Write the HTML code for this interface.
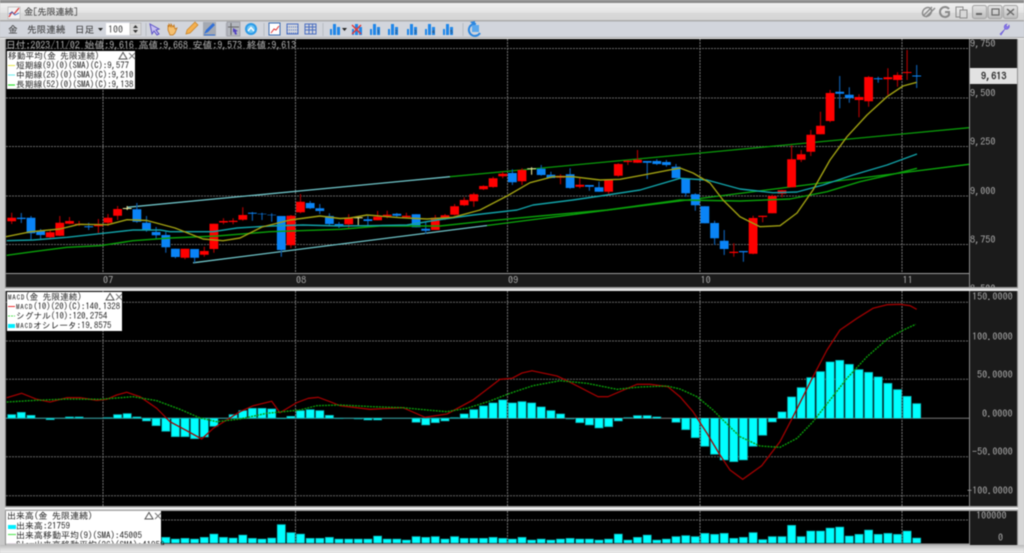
<!DOCTYPE html>
<html><head><meta charset="utf-8"><style>
html,body{margin:0;padding:0;background:#ccc;width:1024px;height:553px;overflow:hidden}
svg{display:block;filter:blur(.45px)}
text{font-family:"IPAGothic","Liberation Mono","Noto Sans CJK JP",monospace;white-space:pre}
.a{fill:#a8a8a8;font-size:10.2px}
.l{fill:#1c1c1c;font-size:8.7px}
.t{fill:#333;font-size:10px}
.m{font-size:7px;letter-spacing:.8px}
</style></head><body>
<svg width="1024" height="553" viewBox="0 0 1024 553" xmlns="http://www.w3.org/2000/svg">
<defs>
<linearGradient id="tb" x1="0" y1="0" x2="0" y2="1"><stop offset="0" stop-color="#f0f0f0"/><stop offset=".55" stop-color="#e4e4e4"/><stop offset=".6" stop-color="#d8d8d8"/><stop offset="1" stop-color="#d6d6d6"/></linearGradient>
<linearGradient id="bt" x1="0" y1="0" x2="0" y2="1"><stop offset="0" stop-color="#e4e4e4"/><stop offset="1" stop-color="#bcbcbc"/></linearGradient>
<linearGradient id="bot" x1="0" y1="0" x2="0" y2="1"><stop offset="0" stop-color="#b8b8b8"/><stop offset=".5" stop-color="#dcdcdc"/><stop offset="1" stop-color="#eeeeee"/></linearGradient>
<g id="bars"><path d="M1 14V8h2v6zM4 14V3h3v11zM8 14V6h3v8z" fill="#1f86e8"/></g>
<g id="lx"><path d="M0 7L4 0.5L8 7z" fill="none" stroke="#555" stroke-width="1"/><path d="M10 1l6 6M16 1l-6 6" stroke="#777" stroke-width="1"/></g>
<clipPath id="top"><rect x="6" y="39" width="1011" height="248"/></clipPath>
<clipPath id="vol"><rect x="0" y="511" width="1017" height="34"/></clipPath>
</defs>

<!-- window chrome -->
<rect width="1024" height="553" fill="#cfcfcf"/>
<rect width="1024" height="3" fill="#8c8c8c"/>
<rect y="3" width="1024" height="17" fill="url(#tb)"/>
<rect y="20" width="1024" height="1.5" fill="#ababab"/>
<rect y="21.5" width="1024" height="15.5" fill="#d2d5dc"/>
<rect y="37" width="1024" height="1" fill="#a8a8a8"/>
<rect y="38" width="1024" height="1" fill="#eee"/>
<rect x="0" y="39" width="5" height="506" fill="#c9c9c9"/>
<rect x="5" y="39" width="1" height="506" fill="#8a8a8a"/>
<rect x="1017" y="39" width="7" height="506" fill="#d6d6d6"/>
<rect x="1017" y="39" width="1" height="506" fill="#8f8f8f"/>
<rect y="545" width="1024" height="8" fill="url(#bot)"/>

<!-- title -->
<rect x="8" y="7" width="12" height="12" fill="#f2f2f2" stroke="#aaa" stroke-width=".6"/>
<path d="M9 17l3-5 2 2 5-6" fill="none" stroke="#d83030" stroke-width="1.2"/>
<path d="M9 14l3-2 3 3 4-2" fill="none" stroke="#3060c0" stroke-width=".8"/>
<text x="24" y="15" class="t" style="font-size:9.2px;fill:#333" textLength="54">金[先限連続]</text>

<g fill="none" stroke="#8a8a8a" stroke-width="1.4">
<path d="M923 16l9-9M926 17l9-9"/><ellipse cx="927" cy="12" rx="4" ry="5" transform="rotate(45 927 12)"/>
<path d="M949 9a5 5 0 1 0 0 6v-3h-4" stroke-width="2"/>
<rect x="956" y="7" width="7" height="10" stroke-width="1"/><rect x="960" y="10" width="7" height="8" fill="#d8d8d8" stroke-width="1"/>
</g>
<g stroke="#a2a2a2" fill="url(#bt)"><rect x="972.5" y="5.5" width="14" height="13" rx="2"/><rect x="988" y="5.5" width="14" height="13" rx="2"/><rect x="1003.5" y="5.5" width="14" height="13" rx="2"/></g>
<rect x="976" y="13" width="6" height="2" fill="#666"/>
<rect x="992" y="9" width="7" height="6" fill="none" stroke="#666" stroke-width="1.2"/>
<path d="M1007 9l7 6M1014 9l-7 6" stroke="#666" stroke-width="1.4"/>

<!-- toolbar -->
<text x="8" y="33" class="t" style="font-size:9.6px">金</text>
<text x="27" y="33" class="t" style="font-size:9.6px">先限連続</text>
<text x="75" y="33" class="t" style="font-size:9.6px">日足</text>
<path d="M98 28h5l-2.5 3z" fill="#222"/>
<rect x="106" y="23" width="35" height="12" fill="#fff"/>
<text x="108" y="33" class="t" style="font-size:10px;fill:#444">100</text>
<rect x="130" y="23" width="11" height="12" fill="#d8d8d8" stroke="#aaa" stroke-width=".6"/>
<path d="M133 28h5l-2.500-3zM133 30h5l-2.500 3z" fill="#333"/>
<path d="M146 23v13M226 23v13M264 23v13M323 23v13M463 23v13" stroke="#b9bcc3"/>
<path d="M150 24l9 5-3 1 3 4-2 1-3-4-2 3z" fill="#c8c0f0" stroke="#5a50c8"/>
<path d="M168 30v-5l1 2 0-3 2 3 0-3 2 3 1-2 1 4 2-1-2 5-2 2h-3z" fill="#f5c070" stroke="#c07010" stroke-width=".7"/>
<path d="M186 34l1-4 8-8 3 3-8 8z" fill="#f4b050" stroke="#c88020" stroke-width=".7"/>
<rect x="203" y="22" width="13" height="14" fill="#a4a9b2"/>
<path d="M204 34l2-4 7-7 2 2-7 7z" fill="#2f6fd8"/><path d="M204 35h11" stroke="#2f6fd8"/>
<rect x="227" y="22" width="13" height="14" fill="#b4b7be" stroke="#8a8d94" stroke-width=".6"/>
<path d="M231 23v12M228 27h11" stroke="#666"/><path d="M233 28l5 3-2 .5 1 3-2 0-1-3-1 1z" fill="#5040c0"/>
<circle cx="251" cy="29" r="6" fill="#2a9ae8"/><circle cx="251" cy="29" r="4" fill="#6cc4f4"/>
<path d="M248 31l3-3.500 3 3.500" fill="none" stroke="#fff" stroke-width="1.500"/>
<rect x="269" y="23" width="11" height="12" fill="#fff" stroke="#3a6ab0"/><path d="M271 33l3-4 2 1 3-4" fill="none" stroke="#e03030"/>
<g fill="none" stroke="#4a6ec0"><rect x="287" y="24" width="11" height="10"/><path d="M287 27h11M287 30h11M287 33h11" stroke-dasharray="1 1"/></g>
<g fill="none" stroke="#4a6ec0"><rect x="305" y="24" width="11" height="10"/><path d="M305 27h11M305 30h11M309 24v10M312.500 24v10"/></g>
<use href="#bars" x="329" y="21"/><path d="M342 28h5l-2.500 3z" fill="#222"/>
<use href="#bars" x="351" y="21"/><path d="M352 25l9 9M361 25l-9 9" stroke="#e03838" stroke-width="1.500"/>
<use href="#bars" x="369" y="21"/><text x="377" y="34" style="font-size:5.500px;fill:#345">1</text>
<use href="#bars" x="387" y="21"/><text x="395" y="34" style="font-size:5.500px;fill:#345">2</text>
<use href="#bars" x="406" y="21"/><text x="414" y="34" style="font-size:5.500px;fill:#345">3</text>
<use href="#bars" x="424" y="21"/><text x="432" y="34" style="font-size:5.500px;fill:#345">4</text>
<use href="#bars" x="442" y="21"/><text x="450" y="34" style="font-size:5.500px;fill:#345">5</text>
<path d="M476 24a6 6 0 1 0 4 9" fill="none" stroke="#2a86e0" stroke-width="2"/><path d="M470 22l5-1 0 5z" fill="#2a86e0"/>
<rect x="472" y="25" width="7" height="7" fill="#5aa8ee"/>
<path d="M1000 34l5-5a3 3 0 0 1 2-5l-1 2 2 1 1-2a3 3 0 0 1-4 4l-4 6z" fill="#8878e8" stroke="#6a58d8" stroke-width=".6"/>

<!-- top panel -->
<rect x="6" y="39" width="963" height="234" fill="#000"/>
<rect x="970" y="39" width="47" height="248" fill="#1b1b1b"/>
<rect x="6" y="273" width="964" height="1" fill="#9a9a9a"/>
<rect x="6" y="274" width="964" height="13" fill="#1b1b1b"/>
<rect x="969" y="39" width="1" height="248" fill="#8d8d8d"/>
<rect x="970" y="68" width="47" height="16" fill="#e2e2e2"/>
<rect y="287" x="5" width="1013" height="1.500" fill="#9c9c9c"/>
<rect y="288.500" x="5" width="1013" height="2.500" fill="#e4e4e4"/>

<g stroke="#666" stroke-dasharray="2 1" fill="none">
<path d="M6 48.500H969M6 98H969M6 146.500H969M6 196H969M6 244.500H969"/>
<path stroke="#777" d="M103 39V273M295.500 39V273M507.500 39V273M700 39V273M902 39V273"/>
</g>

<!-- trendlines -->
<path d="M127 207.300L450 176.700" stroke="#6fc4c8" stroke-width="1.300" fill="none"/>
<path d="M450 176.700L969 127.700" stroke="#0a9a0a" stroke-width="1.300" fill="none"/>
<path d="M193 262.800L487 225.500" stroke="#6fc4c8" stroke-width="1.300" fill="none"/>
<path d="M487 225.500L969 164.300" stroke="#0cab0c" stroke-width="1.300" fill="none"/>

<!-- wicks -->
<path fill="none" stroke="#a80000" stroke-width="1.200" d="M11.700 212.700V224M50.200 230V239.300M59.800 216V236M69.500 217V224.300M79.100 221V226M98.400 219V233M108 214V226M117.600 206V220M185 248.700V259.300M204.300 246.700V256.700M213.900 223.700V252.700M223.500 218.300V224.300M233.100 218.300V224.300M242.800 207.300V220.700M290.900 215V248M300.500 194V213.300M348.700 214.300V228.300M377.600 211V220.300M387.200 210.700V218.300M406.400 212.700V218.300M435.300 215V230M445 214V220M454.600 204V215.300M464.200 197.300V206M473.800 192.700V206.700M483.500 185.300V190M493.100 176.700V187.700M502.700 172V178.300M522 168.300V185M560.500 174.300V184.300M579.800 177.700V188.300M608.600 179.300V194M618.300 163.300V176.700M627.900 160V165M637.500 150V163M753.100 215.700V254.300M733.800 243.300V256.700M762.700 215.700V222.300M772.300 194.700V213.300M782 190V197.300M791.600 145.300V187.300M801.200 150V162M810.800 130V156M820.500 111.700V134.300M830.100 90V122.300M859 94.300V117.300M868.600 76V106.700M887.900 68.300V95M897.500 72.300V86.700M907.100 50V80"/>
<path fill="none" stroke="#0c5aa8" stroke-width="1.200" d="M21.300 213V223M31 216V240M40.600 229V240M88.700 222.700V230M136.900 203V222.700M146.500 216V231.700M156.100 227V239M165.800 231.700V252.700M175.400 248.700V258.300M194.600 249V262.700M252.400 212V220.700M262 212.700V220M271.700 213.300V221.700M281.300 216V256.700M310.200 201V209M319.800 204V214M329.400 213.300V225M339 222V228M367.900 216V226.700M396.800 213V218M416.100 214.300V227.300M425.700 221.700V234M512.400 169.300V185M541.200 165V175.700M550.900 171.700V178.300M570.100 168.300V188.700M589.400 185V190.700M599 181.700V191.700M647.200 161V179M656.800 159.300V165M666.400 160V166.700M676 164V178.300M685.700 178.700V196.700M695.300 193.300V210.700M704.900 206.300V223.300M714.600 220.700V245M724.200 230V255M743.400 251V261.700M839.700 76V108.300M849.300 87.300V102.700M878.200 76.700V82.700M916.700 65V88"/>
<path fill="none" stroke="#e0e090" stroke-width="1.100" d="M127.200 206V210M358.300 216V225M531.600 167.300V174.700"/>

<!-- bodies -->
<path fill="none" stroke="#ff0000" stroke-width="8.800" d="M11.700 217.700V221.300M50.200 232.300V237.300M59.800 222.700V235.700M69.500 221V223.700M79.100 223.800V225M98.400 224.300V226.300M108 217.700V222.700M117.600 209V215.700M185 248.700V257.700M204.300 251V254.700M213.900 223.700V249M223.500 221V222.500M233.100 220.700V222M242.800 215V219.700M290.900 215.700V245.300M300.500 201.700V212.300M348.700 218.300V224.300M377.600 216.700V220.300M387.200 214.700V216.300M406.400 215.700V217.300M435.300 217.700V230M445 215.300V217.700M454.600 206.300V214.700M464.200 200V205.300M473.800 194.300V201.300M483.500 186V189.300M493.100 178.300V187M502.700 173.700V176.300M522 170V181.300M560.500 175.700V177.700M579.800 184.700V186.700M608.600 180V191.700M618.300 164V175.700M627.900 160.700V162M637.500 159.700V162.700M733.800 251.700V253M753.100 218V253.700M762.700 215.700V217M772.300 196V213.300M782 190.300V193.700M791.600 159.300V187.300M801.200 154.300V159.700M810.800 134.700V151.700M820.500 125.700V134.300M830.100 93V121M859 97V100M868.600 77V101.300M887.900 77.300V79.300M897.500 75V80M907.100 72V73"/>
<path fill="none" stroke="#0a84f6" stroke-width="8.800" d="M21.300 217.700V219M31 217.700V233.300M40.600 230.700V235M88.700 226.300V227.300M136.900 209.300V221.700M146.500 222.700V229.700M156.100 232V235.300M165.800 235V247.300M175.400 248.700V257M194.600 249V257.700M252.400 212.700V213.700M262 213.700V214.300M271.700 214.700V215.300M281.300 216V250M310.200 203V208.300M319.800 208.300V211M329.400 216V224M339 224V226M367.900 219.300V221M396.800 213.700V215.700M416.100 214.300V227.300M425.700 228.700V230.700M512.400 173V182.300M541.200 168.700V175M550.900 174.700V178M570.100 174.300V188M589.400 185V186.700M599 187.300V191.700M647.200 161V162.700M656.800 161V164M666.400 162V165M676 166.700V178M685.700 178.700V193.300M695.300 194.300V205.300M704.900 206.300V223.300M714.600 223V238.300M724.200 240.700V249M743.400 251V252.300M839.700 91.700V93.700M849.300 94.700V98M878.200 78.300V79.300M916.700 75.500V76.500"/>
<path fill="none" stroke="#e8e8a0" stroke-width="8.800" d="M127.200 208V209M358.300 217.300V218.300M531.600 168.300V169.300"/>

<!-- MAs -->
<path fill="none" stroke="#0aa00a" stroke-width="1.400" stroke-linejoin="round" d="M6.700 255.300L33 251.700 67 247.300 100 245.700 133 240.700 170 238 217 236 270 231.700 340 229.300 380 226 440 226 480 221.700 540 216 607 210 673 201 680 200 740 201 790 199 827 191.700 860 181.700 897 173.300 917 168.300"/>
<path fill="none" stroke="#12a2a8" stroke-width="1.400" stroke-linejoin="round" d="M6.700 240.700L33 240 67 237.300 103 233.300 133 230 160 230 170 231.700 213 231.700 237 228 270 226 303 225 340 226 367 225.700 407 225 437 220 473 215 517 210 533 205 573 200 607 195 640 190 680 178.300 707 180 740 189 773 192.700 797 192 823 185 853 175 887 165 917 154"/>
<path fill="none" stroke="#a0a012" stroke-width="1.400" stroke-linejoin="round" d="M6 236.700L31 231.700 60 229 79 224.300 108 224.700 127 219.700 147 220.500 175 228 203 239 223 240.700 240 238 262 227 290 220 320 216 340 218.500 350 218 367 215 400 217.700 427 219 453 217.300 480 210 507 196 530 182.700 553 176.700 573 176.700 600 180 620 179.300 647 174.300 673 169.300 680 168 693 173 710 183 723 200 740 216.700 760 226.700 780 225.700 797 213 813 190 830 160 847 136.700 867 115 887 96.700 903 86 916.700 82.300"/>

<!-- top text -->
<text x="6" y="48.500" style="font-size:9.800px;fill:#b4b4b4" textLength="290" lengthAdjust="spacing">日付:2023/11/02 始値:9,616 高値:9,668 安値:9,573 終値:9,613</text>
<rect x="7" y="51" width="128" height="38" fill="#fff"/>
<text x="8" y="59" class="l">移動平均(金 先限連続)</text>
<use href="#lx" x="119" y="52"/>
<path d="M8 65.500h7" stroke="#e8e850" stroke-width="1"/><path d="M8 75h7" stroke="#7ff0f0" stroke-width="1.200"/><path d="M8 85h7" stroke="#30e030" stroke-width="1.200"/>
<text x="16" y="68.500" class="l">短期線(9)(0)(SMA)(C):9,577</text>
<text x="16" y="78" class="l">中期線(26)(0)(SMA)(C):9,210</text>
<text x="16" y="87.500" class="l">長期線(52)(0)(SMA)(C):9,138</text>

<g clip-path="url(#top)">
<text x="970" y="47" class="a">9,750</text>
<text x="970" y="96.500" class="a">9,500</text>
<text x="970" y="145" class="a">9,250</text>
<text x="970" y="194.500" class="a">9,000</text>
<text x="970" y="243" class="a">8,750</text>
<text x="970" y="292" class="a">8,500</text>
</g>
<text x="981" y="79.500" style="font-size:10.200px;font-weight:bold;fill:#333">9,613</text>
<text x="103" y="283.500" class="a">07</text>
<text x="296" y="283.500" class="a">08</text>
<text x="508" y="283.500" class="a">09</text>
<text x="700.500" y="283.500" class="a">10</text>
<text x="902.500" y="283.500" class="a">11</text>

<!-- MACD panel -->
<rect x="6" y="291" width="963" height="215" fill="#000"/>
<rect x="970" y="291" width="47" height="215" fill="#1b1b1b"/>
<rect x="969" y="291" width="1" height="215" fill="#8d8d8d"/>
<g stroke="#666" stroke-dasharray="2 1" fill="none">
<path d="M6 302.300H969M6 341H969M6 379.300H969M6 456.700H969M6 495.700H969"/>
<path stroke="#777" d="M103 291V506M295.500 291V506M507.500 291V506M700 291V506M902 291V506"/>
</g>
<path d="M6 418.300H969" stroke="#777" fill="none"/>

<!-- MACD histogram: up/down from zero -->
<g fill="none" stroke="#0aa8aa" stroke-width="8.800"><path id="hb" d="M11.700 418.300V414.300M21.300 418.300V412M31 418.300V415M50.200 418.300V420M69.500 418.300V416.600M79.100 418.300V416.600M108 418.300V417.300M117.600 418.300V414.300M127.200 418.300V413.300M136.900 418.300V416.600M146.500 418.300V421.300M156.100 418.300V426M165.800 418.300V431.600M175.400 418.300V437M185 418.300V437M194.600 418.300V439M204.300 418.300V437.300M213.900 418.300V426.600M233.100 418.300V414.300M242.800 418.300V410.300M252.400 418.300V408M262 418.300V408M271.700 418.300V408.600M281.300 418.300V419M290.900 418.300V416M300.500 418.300V410.300M310.200 418.300V409.300M319.800 418.300V410.300M329.400 418.300V415M339 418.300V418.900M358.300 418.300V419.300M367.900 418.300V420.300M377.600 418.300V420.300M416.100 418.300V422.600M425.700 418.300V425.300M435.300 418.300V423M445 418.300V421.300M454.600 418.300V417.300M464.200 418.300V413.600M473.800 418.300V409.300M483.500 418.300V405.600M493.100 418.300V402.600M502.700 418.300V399.600M512.400 418.300V402.600M522 418.300V401.300M531.600 418.300V402.600M541.200 418.300V406.600M550.900 418.300V410.300M560.500 418.300V413.600M570.100 418.300V419.300M579.800 418.300V423M589.400 418.300V425.300M599 418.300V428.300M608.600 418.300V427M618.300 418.300V421.300M627.900 418.300V417.300M637.500 418.300V415.300M647.200 418.300V415.300M656.800 418.300V416.600M676 418.300V422.600M685.700 418.300V430M695.300 418.300V438M704.900 418.300V446.600M714.600 418.300V454.600M724.200 418.300V460.300M733.800 418.300V462M743.400 418.300V460.300M753.100 418.300V446.600M762.700 418.300V435.600M772.300 418.300V422.300M782 418.300V411.600M791.600 418.300V396.600M801.200 418.300V387.300M810.800 418.300V377.300M820.500 418.300V371.300M830.100 418.300V361.600M839.700 418.300V360M849.300 418.300V364M859 418.300V369.300M868.600 418.300V372M878.200 418.300V376.600M887.900 418.300V383M897.500 418.300V389.300M907.100 418.300V396M916.700 418.300V403.300"/></g>
<g fill="none" stroke="#00ffff" stroke-width="7.400"><path d="M11.700 418.300V415M21.300 418.300V412.700M31 418.300V415.700M50.200 418.300V419.300M69.500 418.300V417.300M79.100 418.300V417.300M117.600 418.300V415M127.200 418.300V414M136.900 418.300V417.300M146.500 418.300V420.600M156.100 418.300V425.300M165.800 418.300V430.900M175.400 418.300V436.300M185 418.300V436.300M194.600 418.300V438.300M204.300 418.300V436.600M213.900 418.300V425.900M233.100 418.300V415M242.800 418.300V411M252.400 418.300V408.700M262 418.300V408.700M271.700 418.300V409.300M290.900 418.300V416.700M300.500 418.300V411M310.200 418.300V410M319.800 418.300V411M329.400 418.300V415.700M367.900 418.300V419.600M377.600 418.300V419.600M416.100 418.300V421.900M425.700 418.300V424.600M435.300 418.300V422.300M445 418.300V420.600M464.200 418.300V414.300M473.800 418.300V410M483.500 418.300V406.300M493.100 418.300V403.300M502.700 418.300V400.300M512.400 418.300V403.300M522 418.300V402M531.600 418.300V403.300M541.200 418.300V407.300M550.900 418.300V411M560.500 418.300V414.300M579.800 418.300V422.300M589.400 418.300V424.600M599 418.300V427.600M608.600 418.300V426.300M618.300 418.300V420.600M637.500 418.300V416M647.200 418.300V416M656.800 418.300V417.300M676 418.300V421.900M685.700 418.300V429.300M695.300 418.300V437.300M704.900 418.300V445.900M714.600 418.300V453.900M724.200 418.300V459.600M733.800 418.300V461.300M743.400 418.300V459.600M753.100 418.300V445.900M762.700 418.300V434.900M772.300 418.300V421.600M782 418.300V412.300M791.600 418.300V397.300M801.200 418.300V388M810.800 418.300V378M820.500 418.300V372M830.100 418.300V362.300M839.700 418.300V360.700M849.300 418.300V364.700M859 418.300V370M868.600 418.300V372.700M878.200 418.300V377.300M887.900 418.300V383.700M897.500 418.300V390M907.100 418.300V396.700M916.700 418.300V404"/></g>
<path d="M6 418.300H470" stroke="#0aa8aa" fill="none" opacity=".7"/>

<!-- MACD lines -->
<path fill="none" stroke="#a00000" stroke-width="1.300" stroke-linejoin="round" d="M6.700 397.700L21.700 393.300 36.700 399.300 50 402 66.700 397.700 80 397.700 96.700 400.300 106.700 399.300 116.700 395 126.700 392.300 140 396.700 156.700 408.300 170 421.700 186.700 430.700 201.700 439 213.300 428.300 226.700 420 240 411.700 253.300 405.700 271.700 401.300 280 412.700 296.700 402.700 308.300 398.300 318.300 397.300 330 401.700 340 405.700 370 409.300 403 407.700 425 417.300 447 414 473 400 500 379.300 512 378.300 522 373 532 370.700 557 376 567 380.700 598 396.700 608 396.700 637 384.300 650 384.300 668 386.700 680 396.700 693 411.700 707 433.300 720 455 730 470 742.700 479.300 761.700 465.700 780 441.700 793 416.700 813 376.700 827 350 840 330 857 318.300 873 308.300 887 304.700 900 304.300 910 305.700 916.700 309.300"/>
<path fill="none" stroke="#0a9a0a" stroke-width="1.400" stroke-dasharray="2 1" d="M6.700 402L36.700 400.300 66.700 399 100 399.300 133 396.700 156.700 400.700 180 409.300 200 418 216.700 421.700 240 419 266.700 413.300 283 411.700 300 410 316.700 405.700 340 405 373 406.700 403 407.700 427 410 447 411.700 467 408.300 490 401 510 393.300 533 385.700 560 380.700 587 383.300 617 389.300 640 387 667 386 680 389 697 396.700 713 410 723 420 740 436.700 760 446 780 447.300 797 438.300 813 421.700 830 400 847 378.300 867 356.700 887 339.300 902 330.700 915.700 324.300"/>

<!-- MACD legend -->
<rect x="7" y="292" width="115" height="39" fill="#fff"/>
<text x="8" y="300" class="l"><tspan class="m">MACD</tspan>(金 先限連続)</text>
<use href="#lx" x="106" y="293"/>
<path d="M8 306.500h7" stroke="#f03030" stroke-width="1"/><path d="M8 316h7" stroke="#50e050" stroke-dasharray="2 1"/><rect x="8" y="324" width="7" height="4" fill="#00eeff"/>
<text x="16" y="309.500" class="l"><tspan class="m">MACD</tspan>(10)(20)(C):140.1328</text>
<text x="16" y="319" class="l">シグナル(10):120.2754</text>
<text x="16" y="328.500" class="l"><tspan class="m">MACD</tspan>オシレータ:19.8575</text>

<text x="972" y="300" class="a">150.0000</text>
<text x="972" y="340" class="a">100.0000</text>
<text x="977" y="378" class="a">50.0000</text>
<text x="982" y="417" class="a">0.0000</text>
<text x="972" y="455" class="a">-50.0000</text>
<text x="967" y="494" class="a" textLength="46">-100.0000</text>

<!-- separator -->
<rect x="5" y="506" width="1013" height="1.500" fill="#a0a0a0"/>
<rect x="5" y="507.500" width="1013" height="2" fill="#f4f4f4"/>
<rect x="5" y="509.500" width="1013" height="1.500" fill="#a8a8a8"/>

<!-- volume panel -->
<rect x="6" y="511" width="963" height="32.500" fill="#000"/>
<rect x="970" y="511" width="47" height="34" fill="#1b1b1b"/>
<rect x="969" y="511" width="1" height="34" fill="#8d8d8d"/>
<rect x="6" y="543.500" width="964" height="1.500" fill="#9c9c9c"/>
<g stroke="#666" stroke-dasharray="2 1" fill="none">
<path d="M6 520H969"/>
<path stroke="#777" d="M295.500 511V543M507.500 511V543M700 511V543M902 511V543"/>
</g>
<g fill="none" stroke="#0aa8aa" stroke-width="8.800"><path d="M165.800 543V537M175.400 543V538.700M185 543V538M194.600 543V538.700M204.300 543V537M213.900 543V533.700M223.500 543V537M233.100 543V537.700M242.800 543V534.700M252.400 543V538M262 543V538.700M271.700 543V537.700M281.300 543V524.300M290.900 543V532.300M300.500 543V533.700M310.200 543V538M319.800 543V538M329.400 543V537M339 543V538.700M348.700 543V538.700M358.300 543V538.700M367.900 543V538.700M377.600 543V535.700M387.200 543V538.700M396.800 543V538.700M406.400 543V539.700M416.100 543V536.300M425.700 543V537M435.300 543V536.300M445 543V538.700M454.600 543V536.300M464.200 543V538M473.800 543V538M483.500 543V538M493.100 543V537M502.700 543V538M512.400 543V538.700M522 543V537M531.600 543V539.700M541.200 543V538.700M550.900 543V539.700M560.500 543V538.700M570.100 543V538M579.800 543V538.700M589.400 543V538.700M599 543V539.700M608.600 543V538.700M618.300 543V533.700M627.900 543V539.700M637.500 543V537M647.200 543V534.700M656.800 543V539.700M666.400 543V538.700M676 543V536.300M685.700 543V535.300M695.300 543V536.300M704.900 543V533M714.600 543V534M724.200 543V533M733.800 543V538M743.400 543V537M753.100 543V532.300M762.700 543V539.300M772.300 543V536.300M782 543V536.300M791.600 543V525M801.200 543V536.300M810.800 543V530.700M820.500 543V530.700M830.100 543V527.700M839.700 543V526.700M849.300 543V535.700M859 543V534M868.600 543V529.700M878.200 543V534M887.900 543V533M897.500 543V534M907.100 543V530.700M916.700 543V537.700"/></g>
<g fill="none" stroke="#00ffff" stroke-width="7.400"><path d="M165.800 543V537.700M175.400 543V539.400M185 543V538.700M194.600 543V539.400M204.300 543V537.700M213.900 543V534.400M223.500 543V537.700M233.100 543V538.400M242.800 543V535.400M252.400 543V538.700M262 543V539.400M271.700 543V538.400M281.300 543V525M290.900 543V533M300.500 543V534.400M310.200 543V538.700M319.800 543V538.700M329.400 543V537.700M339 543V539.400M348.700 543V539.400M358.300 543V539.400M367.900 543V539.400M377.600 543V536.400M387.200 543V539.400M396.800 543V539.400M406.400 543V540.400M416.100 543V537M425.700 543V537.700M435.300 543V537M445 543V539.400M454.600 543V537M464.200 543V538.700M473.800 543V538.700M483.500 543V538.700M493.100 543V537.700M502.700 543V538.700M512.400 543V539.400M522 543V537.700M531.600 543V540.400M541.200 543V539.400M550.900 543V540.400M560.500 543V539.400M570.100 543V538.700M579.800 543V539.400M589.400 543V539.400M599 543V540.400M608.600 543V539.400M618.300 543V534.400M627.900 543V540.400M637.500 543V537.700M647.200 543V535.400M656.800 543V540.400M666.400 543V539.400M676 543V537M685.700 543V536M695.300 543V537M704.900 543V533.700M714.600 543V534.700M724.200 543V533.700M733.800 543V538.700M743.400 543V537.700M753.100 543V533M762.700 543V540M772.300 543V537M782 543V537M791.600 543V525.700M801.200 543V537M810.800 543V531.400M820.500 543V531.400M830.100 543V528.400M839.700 543V527.400M849.300 543V536.400M859 543V534.700M868.600 543V530.400M878.200 543V534.700M887.900 543V533.700M897.500 543V534.700M907.100 543V531.400M916.700 543V538.400"/></g>

<g clip-path="url(#vol)">
<rect x="6" y="511" width="155" height="34" fill="#fff"/>
<text x="7" y="519" class="l" style="font-size:9px">出来高(金 先限連続)</text>
<use href="#lx" x="145" y="512"/>
<rect x="8" y="525" width="8" height="4" fill="#00eeff"/>
<path d="M8 534.500h8" stroke="#60e860" stroke-width="1.200"/><path d="M8 544h8" stroke="#e080e0" stroke-width="1.200"/>
<text x="16" y="529" class="l" style="font-size:9px">出来高:21759</text>
<text x="16" y="538.500" class="l" style="font-size:9px">出来高移動平均(9)(SMA):45005</text>
<text x="16" y="548" class="l" style="font-size:9px">Slow出来高移動平均(26)(SMA):41959</text>
</g>
<rect x="6" y="543.500" width="155" height="1.500" fill="#c0c0c0"/>
<text x="976" y="519" class="a">100000</text>
<text x="998" y="541" class="a">0</text>
</svg>
</body></html>
